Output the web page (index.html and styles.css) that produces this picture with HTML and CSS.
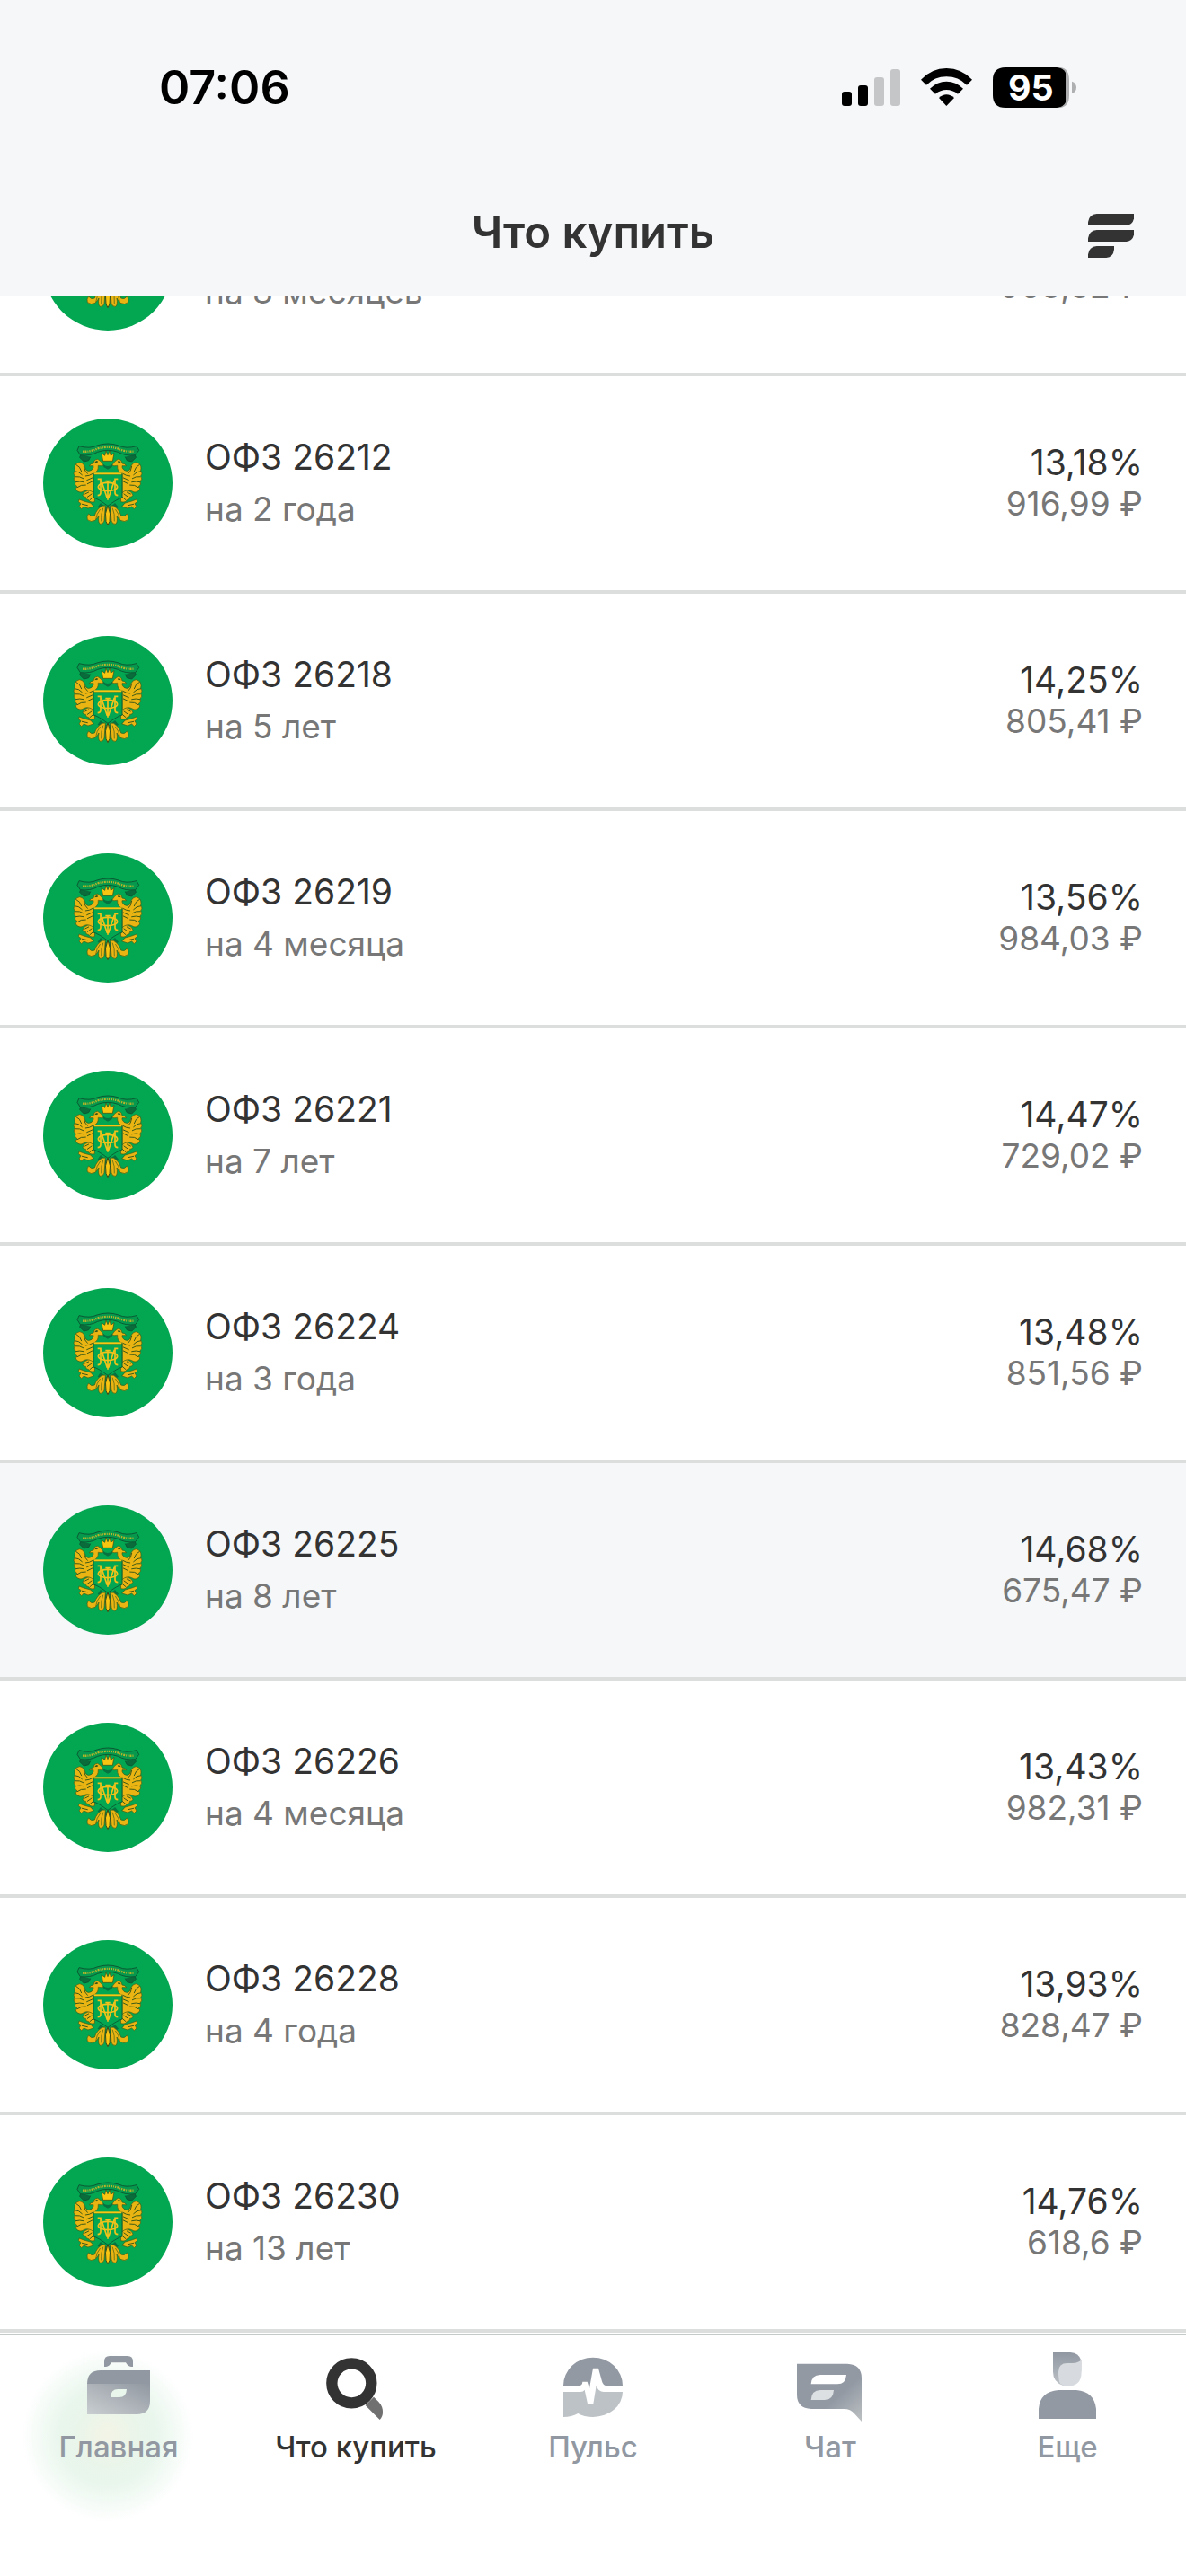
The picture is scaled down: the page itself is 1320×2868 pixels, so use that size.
FILE: index.html
```html
<!DOCTYPE html>
<html lang="ru">
<head>
<meta charset="utf-8">
<meta name="viewport" content="width=device-width, initial-scale=1">
<title>Что купить</title>
<link rel="stylesheet" href="styles.css">
</head>
<body>
<svg class="sprite" aria-hidden="true">
  <defs>
    <!-- one half of the eagle, mirrored to make the whole crest -->
    <g id="wing" stroke="#3c5a17" stroke-width="2" stroke-linejoin="round" stroke-linecap="round" fill="#eab412">
      <path d="M250 340 Q232 352 226 372 Q214 378 206 366 Q198 374 202 386 Q214 396 228 388 Q236 380 240 372 Q236 394 244 400 Q254 402 258 390 L262 340Z"/>
      <path d="M212 330 L190 324 L174 318 L172 326 L180 332 L174 342 L182 350 L190 342 L204 348 L222 342Z"/>
      <path d="M212 286 Q190 290 186 304 Q190 312 196 310 Q196 320 206 320 Q210 330 226 326 L228 290Z"/>
      <path d="M238 206 Q240 224 222 232 L222 296 Q206 282 190 290 Q176 300 164 286 Q160 280 168 276 Q156 268 162 258 Q152 250 160 240 Q152 232 160 222 Q156 206 166 198 Q176 190 186 198 Q194 206 196 218 Q204 228 216 220 Q224 212 222 206 L208 206 Q212 198 222 198 Q224 184 236 184 Q246 188 256 204 L250 206Z"/>
      <path fill="none" stroke-width="3" d="M164 202 Q178 208 182 224 M160 224 Q174 224 184 236 M162 242 Q176 240 188 248 M162 260 Q176 256 190 260 M168 278 Q180 268 196 270 M190 208 Q192 224 202 232 M196 240 Q208 240 220 232 M200 254 L218 246 M202 266 L218 258 M194 300 L206 294 M202 310 L216 300 M210 320 L224 308 M184 334 L202 338 M228 194 L236 192"/>
      <path fill="none" d="M244 352 Q232 366 230 384 M254 348 Q246 366 248 390"/>
      <circle cx="232" cy="192" r="2" fill="#3c4a17"/>
    </g>
    <symbol id="crest" viewBox="54 48 432 432">
      <circle cx="270" cy="264" r="216" fill="#03a651"/>
      <path d="M246 330 L270 350 L294 330 L306 344 L270 368 L236 344Z" fill="#07713f"/>
      <use href="#wing"/>
      <use href="#wing" transform="translate(540 0) scale(-1 1)"/>
      <path d="M270 338 Q258 366 264 392 L270 404 L276 392 Q282 366 270 338Z" fill="#f8c510" stroke="#3c4a17" stroke-width="3"/>
      <path d="M222 234 H318 V312 Q302 316 270 340 Q238 316 222 312Z" fill="#03a651" stroke="#0a6137" stroke-width="3"/>
      <path d="M224 232 H316" stroke="#f8c510" stroke-width="6"/>
      <g fill="none" stroke="#f3c21a" stroke-width="5">
        <path d="M236 250 H246 V296 Q246 304 236 305 M304 250 H294 V296 Q294 304 304 305"/>
        <ellipse cx="270" cy="276" rx="32" ry="14"/>
        <path d="M270 254 V320 M248 254 L268 314 M292 254 L272 314 M262 257 H278"/>
      </g>
      <path d="M254 200 Q270 214 286 200 L284 210 L270 218 L256 210Z" fill="#07713f"/>
      <path d="M254 190 L249 164 L260 172 L264 156 L270 170 L276 156 L280 172 L291 164 L286 190Z" fill="#f8c510" stroke="#3c4a17" stroke-width="2"/>
      <path d="M180 168 L176 178 L190 192 L206 188 L212 176 M360 168 L364 178 L350 192 L334 188 L328 176" fill="#0a6b3b" stroke="#0a5a33" stroke-width="3"/>
      <path d="M174 140 Q210 150 234 138 Q270 126 306 138 Q330 150 366 140 L374 154 L362 170 Q328 174 304 160 Q270 148 236 160 Q212 174 178 170 L168 154Z" fill="#06984c" stroke="#0a5a33" stroke-width="3"/>
      <path d="M186 158 Q212 160 234 149 Q270 138 306 149 Q328 160 356 158" fill="none" stroke="#b6b42a" stroke-width="7" stroke-dasharray="4 3 6 3 3 3"/>
    </symbol>
    <linearGradient id="steel" x1="0" y1="1" x2="1" y2="0"><stop offset="0" stop-color="#c9ced1"/><stop offset="1" stop-color="#9298a1"/></linearGradient>
    <linearGradient id="bubble" x1="0" y1="0" x2="1" y2="1"><stop offset=".6" stop-color="#9299a3"/><stop offset="1" stop-color="#bdc1c3"/></linearGradient>
    <linearGradient id="hair" x1="0" y1="0" x2="0" y2="1"><stop offset="0" stop-color="#9097a1"/><stop offset="1" stop-color="#bdc2c7"/></linearGradient>
  </defs>
</svg>

<header class="header">
  <div class="status">
    <span class="time">07:06</span>
    <div class="indicators">
      <svg width="65" height="45" viewBox="51 42 195 135" aria-hidden="true">
        <rect x="51" y="123" width="33" height="48" rx="9"/>
        <rect x="105" y="102" width="33" height="69" rx="9"/>
        <g fill="#c5c6c8"><rect x="159" y="75" width="33" height="96" rx="9"/><rect x="213" y="48" width="33" height="123" rx="9"/></g>
      </svg>
      <svg width="57" height="45" viewBox="315 42 171 135" aria-hidden="true">
        <path d="M315 83 Q351 45 400 45 Q450 45 486 83 L468 101 Q440 73 400 73 Q361 73 333 101Z"/>
        <path d="M345 113 Q369 89 400 89 Q432 89 456 113 L438 131 Q421 117 400 117 Q380 117 363 131Z"/>
        <path d="M375 144 Q387 133 400 133 Q414 133 426 144 L400 171Z"/>
      </svg>
      <svg width="93" height="45" viewBox="555 42 279 135" role="img" aria-label="Заряд 95">
        <path d="M780 42 Q810 46 810 84 V135 Q810 173 780 177Z" fill="#aeafb0"/>
        <path d="M597 42 H768 Q790 43 798 60 V159 Q790 176 768 177 H597 Q555 177 555 135 V84 Q555 42 597 42Z"/>
        <path d="M819 89 Q834 94 834 109 Q834 124 819 129Z" fill="#aeafb0"/>
        <text class="charge" x="682" y="153" text-anchor="middle">95</text>
      </svg>
    </div>
  </div>
  <div class="titlebar">
    <h1>Что купить</h1>
    <button class="menu" type="button" aria-label="Фильтр">
      <svg width="51" height="58" viewBox="393 87 153 174" aria-hidden="true">
        <path d="M393 153 V142 Q396 116 422 114 H547 V125 Q544 151 521 153Z"/>
        <path d="M393 207 V196 Q396 170 422 168 H547 V179 Q544 205 521 207Z"/>
        <path d="M393 261 V250 Q396 224 422 222 H480 V233 Q477 259 454 261Z"/>
      </svg>
    </button>
  </div>
</header>

<main>
  <ul class="list">
    <li><a class="row" href="#"><svg class="avatar" aria-hidden="true"><use href="#crest"/></svg><span class="bond"><span class="name"></span><span class="term">на 8 месяцев</span></span><span class="quote"><span class="yield"></span><span class="price">968,82 ₽</span></span></a></li>
    <li><a class="row" href="#"><svg class="avatar" aria-hidden="true"><use href="#crest"/></svg><span class="bond"><span class="name">ОФЗ 26212</span><span class="term">на 2 года</span></span><span class="quote"><span class="yield">13,18%</span><span class="price">916,99 ₽</span></span></a></li>
    <li><a class="row" href="#"><svg class="avatar" aria-hidden="true"><use href="#crest"/></svg><span class="bond"><span class="name">ОФЗ 26218</span><span class="term">на 5 лет</span></span><span class="quote"><span class="yield">14,25%</span><span class="price">805,41 ₽</span></span></a></li>
    <li><a class="row" href="#"><svg class="avatar" aria-hidden="true"><use href="#crest"/></svg><span class="bond"><span class="name">ОФЗ 26219</span><span class="term">на 4 месяца</span></span><span class="quote"><span class="yield">13,56%</span><span class="price">984,03 ₽</span></span></a></li>
    <li><a class="row" href="#"><svg class="avatar" aria-hidden="true"><use href="#crest"/></svg><span class="bond"><span class="name">ОФЗ 26221</span><span class="term">на 7 лет</span></span><span class="quote"><span class="yield">14,47%</span><span class="price">729,02 ₽</span></span></a></li>
    <li><a class="row" href="#"><svg class="avatar" aria-hidden="true"><use href="#crest"/></svg><span class="bond"><span class="name">ОФЗ 26224</span><span class="term">на 3 года</span></span><span class="quote"><span class="yield">13,48%</span><span class="price">851,56 ₽</span></span></a></li>
    <li><a class="row row-pressed" href="#"><svg class="avatar" aria-hidden="true"><use href="#crest"/></svg><span class="bond"><span class="name">ОФЗ 26225</span><span class="term">на 8 лет</span></span><span class="quote"><span class="yield">14,68%</span><span class="price">675,47 ₽</span></span></a></li>
    <li><a class="row" href="#"><svg class="avatar" aria-hidden="true"><use href="#crest"/></svg><span class="bond"><span class="name">ОФЗ 26226</span><span class="term">на 4 месяца</span></span><span class="quote"><span class="yield">13,43%</span><span class="price">982,31 ₽</span></span></a></li>
    <li><a class="row" href="#"><svg class="avatar" aria-hidden="true"><use href="#crest"/></svg><span class="bond"><span class="name">ОФЗ 26228</span><span class="term">на 4 года</span></span><span class="quote"><span class="yield">13,93%</span><span class="price">828,47 ₽</span></span></a></li>
    <li><a class="row" href="#"><svg class="avatar" aria-hidden="true"><use href="#crest"/></svg><span class="bond"><span class="name">ОФЗ 26230</span><span class="term">на 13 лет</span></span><span class="quote"><span class="yield">14,76%</span><span class="price">618,6 ₽</span></span></a></li>
  </ul>
</main>

<nav class="tabs">
  <a class="tab" href="#">
    <svg class="tab-icon" viewBox="96 48 240 240" aria-hidden="true">
      <path fill="#9298a1" d="M168 105 V87 Q168 69 186 69 H246 Q264 69 264 87 V105 H258 Q246 103 240 91 H192 Q186 103 174 105Z"/>
      <path fill="#9298a1" d="M111 162 Q111 117 156 117 H321 V162Z"/>
      <path fill="url(#steel)" fill-rule="evenodd" d="M111 162 H321 V219 Q321 264 276 264 H111Z M189 207 Q190 180 214 180 H243 Q242 207 218 207Z"/>
    </svg>
    <span>Главная</span>
  </a>
  <a class="tab tab-active" href="#" aria-current="page">
    <svg class="tab-icon" viewBox="888 48 240 240" aria-hidden="true">
      <path fill="#707070" d="M1040 234 L1068 206 L1084 222 Q1099 238 1098 258 Q1098 272 1088 282Z"/>
      <circle cx="994" cy="160" r="66" fill="none" stroke="#333" stroke-width="37"/>
    </svg>
    <span>Что купить</span>
  </a>
  <a class="tab" href="#">
    <svg class="tab-icon" viewBox="60 48 240 240" aria-hidden="true">
      <path fill="#9299a3" d="M81 168 A99 94 0 0 1 279 168 H224 Q214 168 210 154 L198 110 H180 L168 178 L161 155 H145 Q144 168 134 168Z"/>
      <path fill="#bcc2c6" d="M81 189 H138 Q148 189 152 182 L162 229 H181 L191 168 Q197 189 216 189 H279 A99 84 0 0 1 180 273 Q150 273 130 261 Q108 273 81 273Z"/>
    </svg>
    <span>Пульс</span>
  </a>
  <a class="tab" href="#">
    <svg class="tab-icon" viewBox="852 48 240 240" aria-hidden="true">
      <path fill="url(#bubble)" d="M861 95 H1029 Q1077 97 1077 143 V288 L1053 262 Q1040 246 1018 246 H909 Q861 244 861 198Z"/>
      <path fill="#fff" d="M908 163 Q910 132 939 132 H1026 Q1024 163 996 163Z"/>
      <path fill="#dce0e3" d="M908 216 Q910 183 939 183 H984 Q982 216 954 216Z"/>
    </svg>
    <span>Чат</span>
  </a>
  <a class="tab" href="#">
    <svg class="tab-icon" viewBox="204 48 240 240" aria-hidden="true">
      <path fill="url(#hair)" d="M276 57 H334 Q362 58 370 84 V120 L310 168 Q276 156 276 122Z"/>
      <path fill="#d7dbdf" d="M371 80 V122 Q371 170 324 170 Q310 169 300 161 Q294 150 294 122 Q294 93 324 93 H340 Q364 92 371 80Z"/>
      <path fill="#9299a3" d="M228 279 V246 Q232 188 294 183 H354 Q414 188 420 246 V279Z"/>
    </svg>
    <span>Еще</span>
  </a>
</nav>
</body>
</html>
```
FILE: styles.css
```css
* {
  box-sizing: border-box;
}

body {
  margin: 0;
  background: #fff;
  color: #333;
  font-family: Inter, "Liberation Sans", sans-serif;
}

h1,
ul {
  margin: 0;
  padding: 0;
}

a {
  color: inherit;
  text-decoration: none;
}

svg {
  display: block;
}

.sprite {
  position: absolute;
  width: 0;
  height: 0;
}

.header {
  position: sticky;
  top: 0;
  z-index: 2;
  background: #f5f7f9;
}

.status {
  display: flex;
  align-items: center;
  justify-content: space-between;
  height: 194px;
  padding: 0 122px 0 177px;
  color: #000;
}

.time {
  font-size: 52px;
  font-weight: 600;
}

.indicators {
  display: flex;
  gap: 23px;
}

.charge {
  fill: #fff;
  font-size: 118px;
  font-weight: 700;
}

.titlebar {
  display: grid;
  grid-template-columns: 1fr auto 1fr;
  align-items: center;
  height: 136px;
  padding: 0 58px 8px;
}

.titlebar h1 {
  grid-column: 2;
  font-size: 49px;
  font-weight: 600;
}

.menu {
  justify-self: end;
  padding: 0;
  border: 0;
  background: none;
  fill: #333;
}

/* the list is scrolled so that its first row slides under the header */
.list {
  margin-top: -153px;
  list-style: none;
}

.row {
  display: flex;
  align-items: center;
  gap: 36px;
  height: 242px;
  padding: 0 48px;
  border-bottom: 4px solid #dcdede;
}

.row-pressed {
  background: #f5f7f9;
}

.avatar {
  flex: none;
  width: 144px;
  height: 144px;
}

.bond,
.quote {
  display: flex;
  flex-direction: column;
}

.bond {
  flex: 1;
}

.quote {
  text-align: right;
}

.name,
.yield {
  font-size: 39px;
}

.term,
.price {
  color: #777;
  font-size: 37px;
}

.name,
.term {
  min-height: 58px;
  line-height: 58px;
}

.yield,
.price {
  min-height: 46px;
  line-height: 46px;
}

.tabs {
  position: sticky;
  bottom: 0;
  display: grid;
  grid-template-columns: repeat(5, 1fr);
  margin-top: 2px;
  padding: 16px 0 124px;
  border-top: 1px solid #c4caca;
  background: radial-gradient(circle 96px at 120px 112px, #f3f4e6 0, #eaf5ea 35%, #e8f6ec 55%, #fff 100%) #fff;
}

.tab {
  display: flex;
  flex-direction: column;
  align-items: center;
  gap: 8px;
  color: #9298a1;
  font-size: 33px;
  font-weight: 500;
  line-height: 40px;
}

.tab-active {
  color: #333;
}

.tab-icon {
  width: 80px;
  height: 80px;
}
```
